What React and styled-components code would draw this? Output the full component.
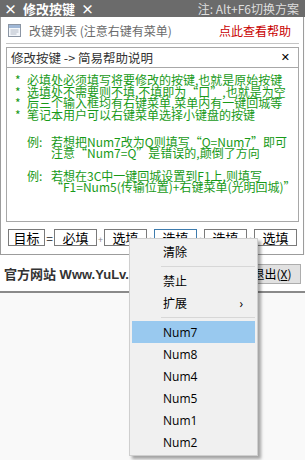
import React from 'react';
import styled, { createGlobalStyle } from 'styled-components';

const CJK = '"Noto Sans CJK SC", "Noto Sans", sans-serif';

const GlobalStyle = createGlobalStyle`
  body {
    margin: 0;
    background: #f9f9f9;
    font-family: ${CJK};
  }
`;

const Page = styled.div`
  position: relative;
  width: 305px;
  height: 460px;
  overflow: hidden;
`;

const TitleBar = styled.div`
  height: 17px;
  background: #6b6b6b;
  display: flex;
  align-items: center;
  justify-content: space-between;
  padding: 0 6px 0 4px;
`;

const TitleText = styled.div`
  color: #fff;
  font-size: 13px;
  font-weight: bold;
  line-height: 17px;
  display: flex;
  gap: 6px;
`;

const TitleHint = styled.div`
  color: #dedede;
  font-size: 12px;
  line-height: 17px;
`;

const Panel = styled.div`
  background: #fff;
  border: 1px solid #9c9c9c;
  border-top: none;
  margin-right: 1px;
  padding: 0 4px 8px 5px;
`;

const HeaderRow = styled.div`
  height: 26px;
  display: flex;
  align-items: center;
  padding: 0 8px 0 2px;
  border-bottom: 1px solid #c4c4c4;
`;

const HeaderText = styled.span`
  color: #6a6a6a;
  font-size: 12px;
  margin-left: 8px;
  flex: 1;
`;

const HelpLink = styled.span`
  color: #c80000;
  font-size: 12px;
`;

const HelpBox = styled.div`
  margin-top: 3px;
  border: 1px solid #a8a8a8;
  height: 173px;
`;

const HelpHeader = styled.div`
  height: 19px;
  border-bottom: 1px solid #a8a8a8;
  display: flex;
  align-items: center;
  justify-content: space-between;
  padding: 0 8px 0 4px;
  font-size: 12.5px;
  color: #333;
`;

const Close = styled.span`
  font-family: "DejaVu Sans", sans-serif;
  font-weight: bold;
  font-size: 11px;
  color: #000;
`;

const HelpBody = styled.div`
  padding: 6px 0 0 8px;
  color: #189a18;
  font-size: 12px;
  line-height: 11.7px;
  white-space: nowrap;
`;

const Line = styled.div`
  display: flex;
`;

const Mark = styled.span`
  width: ${p => p.$w}px;
  flex: none;
`;

const Example = styled.div`
  margin: ${p => p.$top}px 0 0 12px;
  line-height: 11.5px;
`;

const KeyRow = styled.div`
  display: flex;
  align-items: center;
  margin: 7px 0 0 2px;
`;

const KeyBox = styled.div`
  width: ${p => p.$w}px;
  height: 17px;
  box-sizing: border-box;
  border: 1px solid ${p => (p.$focused ? '#3d7bad' : '#7a7a7a')};
  display: flex;
  align-items: center;
  justify-content: center;
  font-size: 13px;
  color: #000;
`;

const Joint = styled.span`
  width: ${p => p.$w}px;
  text-align: center;
  font-size: ${p => (p.$small ? 9 : 12)}px;
  color: ${p => (p.$small ? '#8a8a8a' : '#222')};
  padding-top: ${p => (p.$small ? 3 : 0)}px;
`;

const Footer = styled.div`
  height: 36px;
  background: #fff;
  border-bottom: 2px solid #8a8a8a;
  display: flex;
  align-items: center;
  justify-content: space-between;
  padding: 0 4px 0 4px;
`;

const Site = styled.span`
  font-family: "Liberation Sans", ${CJK};
  font-weight: bold;
  font-size: 13px;
  color: #333;
  margin-top: 1px;
`;

const ExitButton = styled.button`
  width: 58px;
  height: 20px;
  padding: 0;
  border: 1px solid #adadad;
  background: #e1e1e1;
  font-family: ${CJK};
  font-size: 12px;
  color: #000;
  margin-top: 1px;
`;

const Menu = styled.div`
  position: absolute;
  left: 129px;
  top: 238px;
  width: 123px;
  padding: 2px;
  background: #f0f0f0;
  border: 1px solid #cfcfcf;
  box-shadow: 3px 3px 3px rgba(0, 0, 0, 0.35);
  font-family: "Open Sans", ${CJK};
  font-size: 12px;
  color: #000;
`;

const MenuItem = styled.div`
  height: 22px;
  display: flex;
  align-items: center;
  justify-content: space-between;
  padding: 0 12px 0 31px;
  background: ${p => (p.$active ? '#99c9ef' : 'transparent')};
`;

const MenuSep = styled.div`
  height: 1px;
  background: #d7d7d7;
  margin: 3px 0 3px 29px;
`;

const ListIcon = () => (
  <svg width="13" height="13" viewBox="0 0 13 13">
    <rect x="0.5" y="0.5" width="12" height="12" fill="#f4f7fb" stroke="#8b95a3" />
    <rect x="1" y="1" width="11" height="3" fill="#9fb7d6" />
    <rect x="2.5" y="5.5" width="8" height="1" fill="#b3bcc8" />
    <rect x="2.5" y="7.5" width="8" height="1" fill="#b3bcc8" />
    <rect x="2.5" y="9.5" width="6" height="1" fill="#b3bcc8" />
  </svg>
);

const bullets = [
  '必填处必须填写将要修改的按键,也就是原始按键',
  '选填处不需要则不填,不填即为“口”,也就是为空',
  '后三个输入框均有右键菜单,菜单内有一键回城等',
  '笔记本用户可以右键菜单选择小键盘的按键'
];

const numKeys = ['Num7', 'Num8', 'Num4', 'Num5', 'Num1', 'Num2'];

export default function App() {
  return (
    <Page>
      <GlobalStyle />
      <TitleBar>
        <TitleText>
          <span>×</span>
          <span>修改按键</span>
          <span>×</span>
        </TitleText>
        <TitleHint>注: Alt+F6切换方案</TitleHint>
      </TitleBar>
      <Panel>
        <HeaderRow>
          <ListIcon />
          <HeaderText>改键列表 (注意右键有菜单)</HeaderText>
          <HelpLink>点此查看帮助</HelpLink>
        </HeaderRow>
        <HelpBox>
          <HelpHeader>
            <span>修改按键 -&gt; 简易帮助说明</span>
            <Close>✕</Close>
          </HelpHeader>
          <HelpBody>
            {bullets.map(text => (
              <Line key={text}>
                <Mark $w={12}>*</Mark>
                <span>{text}</span>
              </Line>
            ))}
            <Example $top={15}>
              <Line>
                <Mark $w={24}>例:</Mark>
                <span>若想把Num7改为Q则填写“Q=Num7”即可</span>
              </Line>
              <Line>
                <Mark $w={24} />
                <span>注意“Num7=Q”是错误的,颠倒了方向</span>
              </Line>
            </Example>
            <Example $top={11}>
              <Line>
                <Mark $w={24}>例:</Mark>
                <span>若想在3C中一键回城设置到F1上,则填写</span>
              </Line>
              <Line>
                <Mark $w={24} />
                <span>“F1=Num5(传输位置)+右键菜单(光明回城)”</span>
              </Line>
            </Example>
          </HelpBody>
        </HelpBox>
        <KeyRow>
          <KeyBox $w={37}>目标</KeyBox>
          <Joint $w={9}>=</Joint>
          <KeyBox $w={43}>必填</KeyBox>
          <Joint $w={7} $small>+</Joint>
          <KeyBox $w={43}>选填</KeyBox>
          <Joint $w={7} $small>+</Joint>
          <KeyBox $w={43} $focused>选填</KeyBox>
          <Joint $w={7} $small>+</Joint>
          <KeyBox $w={43}>选填</KeyBox>
          <Joint $w={7} $small>+</Joint>
          <KeyBox $w={43}>选填</KeyBox>
        </KeyRow>
      </Panel>
      <Footer>
        <Site>官方网站 Www.YuLv.net</Site>
        <ExitButton>
          退出(<u>X</u>)
        </ExitButton>
      </Footer>
      <Menu>
        <MenuItem>清除</MenuItem>
        <MenuSep />
        <MenuItem>禁止</MenuItem>
        <MenuItem>
          <span>扩展</span>
          <span>›</span>
        </MenuItem>
        <MenuSep />
        {numKeys.map((key, i) => (
          <MenuItem key={key} $active={i === 0}>
            {key}
          </MenuItem>
        ))}
      </Menu>
    </Page>
  );
}
